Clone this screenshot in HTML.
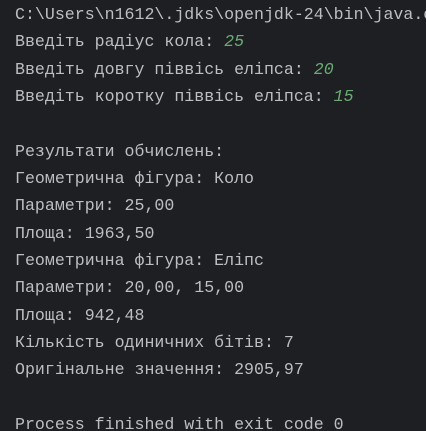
<!DOCTYPE html>
<html><head><meta charset="utf-8"><style>
html,body{margin:0;padding:0;background:#1e1f22;width:426px;height:431px;overflow:hidden}
pre{margin:0;padding:1px 0 0 15px;font-family:"Liberation Mono","DejaVu Sans Mono",monospace;font-size:16.6px;line-height:27.33px;color:#bcbec4;white-space:pre;overflow:hidden;width:411px}
i{color:#6aab73;font-style:italic}
</style></head><body><pre>C:\Users\n1612\.jdks\openjdk-24\bin\java.exe
Введіть радіус кола: <i>25</i>
Введіть довгу піввісь еліпса: <i>20</i>
Введіть коротку піввісь еліпса: <i>15</i>

Результати обчислень:
Геометрична фігура: Коло
Параметри: 25,00
Площа: 1963,50
Геометрична фігура: Еліпс
Параметри: 20,00, 15,00
Площа: 942,48
Кількість одиничних бітів: 7
Оригінальне значення: 2905,97

Process finished with exit code 0</pre></body></html>
